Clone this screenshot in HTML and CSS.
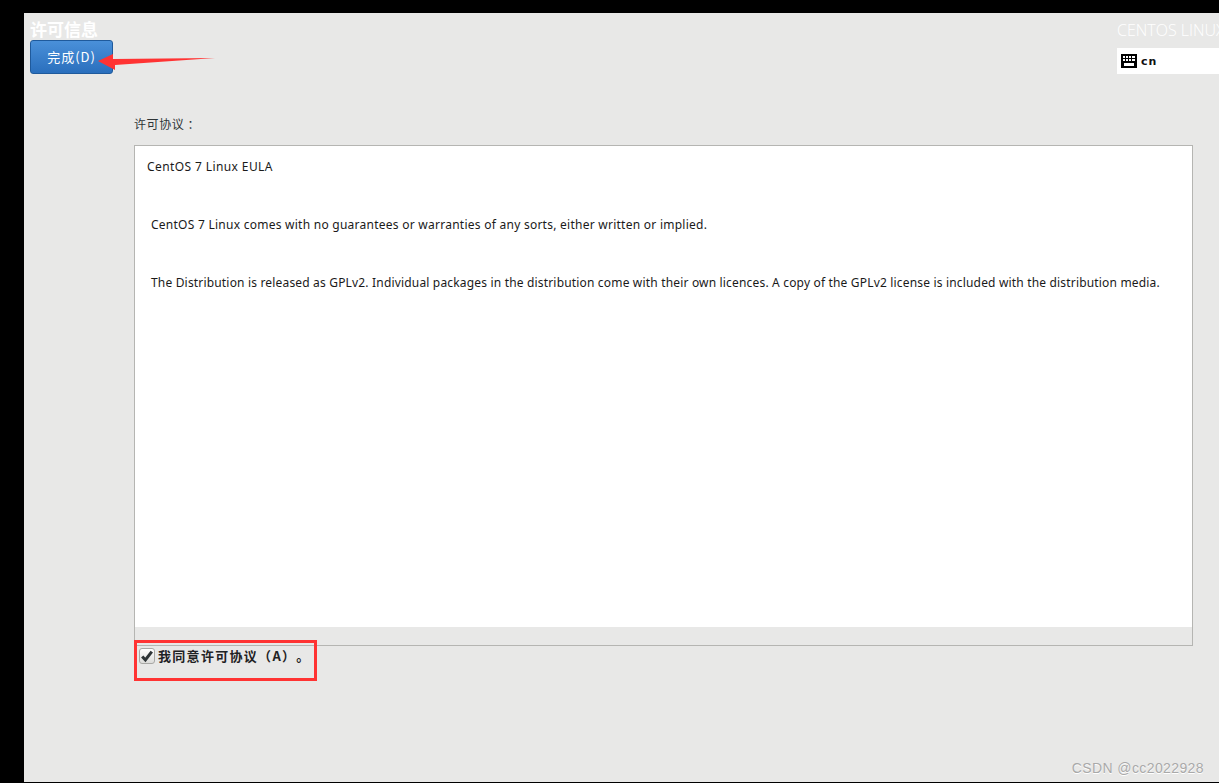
FILE: index.html
```html
<!DOCTYPE html>
<html lang="zh">
<head>
<meta charset="utf-8">
<title>许可信息</title>
<link rel="stylesheet" href="styles.css">
</head>
<body>
<div class="screen">
  <header class="top">
    <div class="top-left">
      <h1 class="title">许可信息</h1>
      <button class="done" type="button">完成(D)</button>
    </div>
    <div class="top-right">
      <div class="product">CENTOS LINUX 7</div>
      <div class="kbd">
        <svg class="kbd-icon" viewBox="0 0 16 14" width="16" height="14" aria-hidden="true">
          <rect x="0" y="0" width="16" height="14" fill="#000"/>
          <g fill="#fff">
            <rect x="2" y="2" width="2" height="2"/><rect x="5" y="2" width="2" height="2"/><rect x="8" y="2" width="2" height="2"/><rect x="11" y="2" width="3" height="2"/>
            <rect x="2" y="5" width="2" height="2"/><rect x="5" y="5" width="2" height="2"/><rect x="8" y="5" width="2" height="2"/><rect x="11" y="5" width="3" height="2"/>
            <rect x="3" y="9" width="10" height="3"/>
          </g>
        </svg>
        <span class="kbd-label">cn</span>
      </div>
    </div>
  </header>
  <main class="body">
    <div class="label">许可协议<span class="colon">：</span></div>
    <section class="eula">
      <div class="eula-text">
        <p class="heading">CentOS 7 Linux EULA</p>
        <p class="para second">CentOS 7 Linux comes with no guarantees or warranties of any sorts, either written or implied.</p>
        <p class="para third">The Distribution is released as GPLv2. Individual packages in the distribution come with their own licences. A copy of the GPLv2 license is included with the distribution media.</p>
      </div>
      <div class="scroll-strip"></div>
    </section>
    <label class="agree">
      <span class="check">
        <svg viewBox="0 0 14 14" width="14" height="14" aria-hidden="true"><path d="M2.2 7.4 L5.4 11 L11.8 2.6" fill="none" stroke="#2e3436" stroke-width="3"/></svg>
      </span>
      <span class="agree-text">我同意许可协议（A）。</span>
    </label>
  </main>
  <svg class="arrow" viewBox="0 0 120 20" width="120" height="20" aria-hidden="true">
    <path d="M0 8 L15 1 L15 6 L117 5 L17 12 L17 17 Z" fill="#ff3333"/>
  </svg>
  <div class="redbox"></div>
  <div class="watermark">CSDN @cc2022928</div>
</div>
</body>
</html>
```
FILE: styles.css
```css
* { box-sizing: border-box; }
html, body { margin: 0; height: 100%; background: #000; overflow: hidden; }
body { padding: 13px 0 1px 24px; font-family: "Noto Sans", "Noto Sans CJK SC", sans-serif; }
.screen {
  position: relative;
  height: 769px;
  background: #e8e8e7;
  overflow: hidden;
  color: #2e3436;
}
.top { display: flex; justify-content: space-between; height: 61px; padding-left: 6px; }
.top-left { display: flex; flex-direction: column; }
.title {
  margin: 5px 0 0;
  height: 22px;
  font: bold 17px/21px "Noto Sans CJK SC", sans-serif;
  color: #fff;
}
.done {
  width: 83px;
  height: 34px;
  padding: 0 0 2px;
  border: 1px solid #1f5a9c;
  border-radius: 3px;
  background: linear-gradient(#4a90d9, #2a6fbd);
  color: #fff;
  font: 13px/1 "Noto Sans CJK SC", sans-serif;
  letter-spacing: 1px;
}
.top-right { width: 102px; display: flex; flex-direction: column; }
.product {
  margin-top: 8px;
  height: 18px;
  color: #fff;
  font: 300 16px/18px "Open Sans", sans-serif;
  white-space: nowrap;
}
.kbd {
  margin-top: 9px;
  height: 26px;
  background: #fff;
  display: flex;
  align-items: center;
  padding-left: 4px;
  gap: 4px;
}
.kbd-icon { display: block; }
.kbd-label { font: bold 11px/1 "DejaVu Sans", sans-serif; color: #111; letter-spacing: 1px; }
.body { padding: 0 26px 0 110px; }
.label {
  margin-top: 41px;
  height: 18px;
  font: 12px/18px "Noto Sans CJK SC", sans-serif;
  letter-spacing: 0.6px;
}
.colon { margin-left: 3px; font-family: "Noto Sans CJK TC", sans-serif; }
.eula {
  margin-top: 12px;
  height: 501px;
  border: 1px solid #b5b5b2;
  background: #fff;
  display: flex;
  flex-direction: column;
}
.eula-text { flex: 1; padding: 12px 0 0 12px; font-size: 12px; line-height: 17px; color: #1a1a1a; white-space: nowrap; }
.eula-text p { margin: 0; }
.heading { letter-spacing: 0.4px; }
.eula-text .para { padding-left: 4px; margin-top: 41px; }
.second { letter-spacing: 0.255px; }
.third { letter-spacing: 0.175px; }
.scroll-strip { height: 18px; background: #e8e8e7; }
.agree { display: flex; align-items: center; gap: 3px; margin: 0 0 0 5px; height: 20px; }
.check {
  width: 16px;
  height: 16px;
  border: 1px solid #a8a8a5;
  border-radius: 3px;
  background: linear-gradient(#fff, #dcdcda);
  display: flex;
  align-items: center;
  justify-content: center;
}
.agree-text {
  padding-bottom: 2px;
  font: bold 13px/1 "Noto Sans CJK SC", sans-serif;
  letter-spacing: 1.3px;
  color: #1f2224;
  text-spacing-trim: space-all;
}
.arrow { position: absolute; left: 74px; top: 40px; }
.redbox { position: absolute; left: 110px; top: 627px; width: 183px; height: 41px; border: 3px solid #ff3333; }
.watermark { position: absolute; right: 15px; top: 746px; font: 14px/18px "Liberation Sans", sans-serif; letter-spacing: 0.4px; color: #a9a9a9; text-shadow: 0 1px 0 #fff; }
```
